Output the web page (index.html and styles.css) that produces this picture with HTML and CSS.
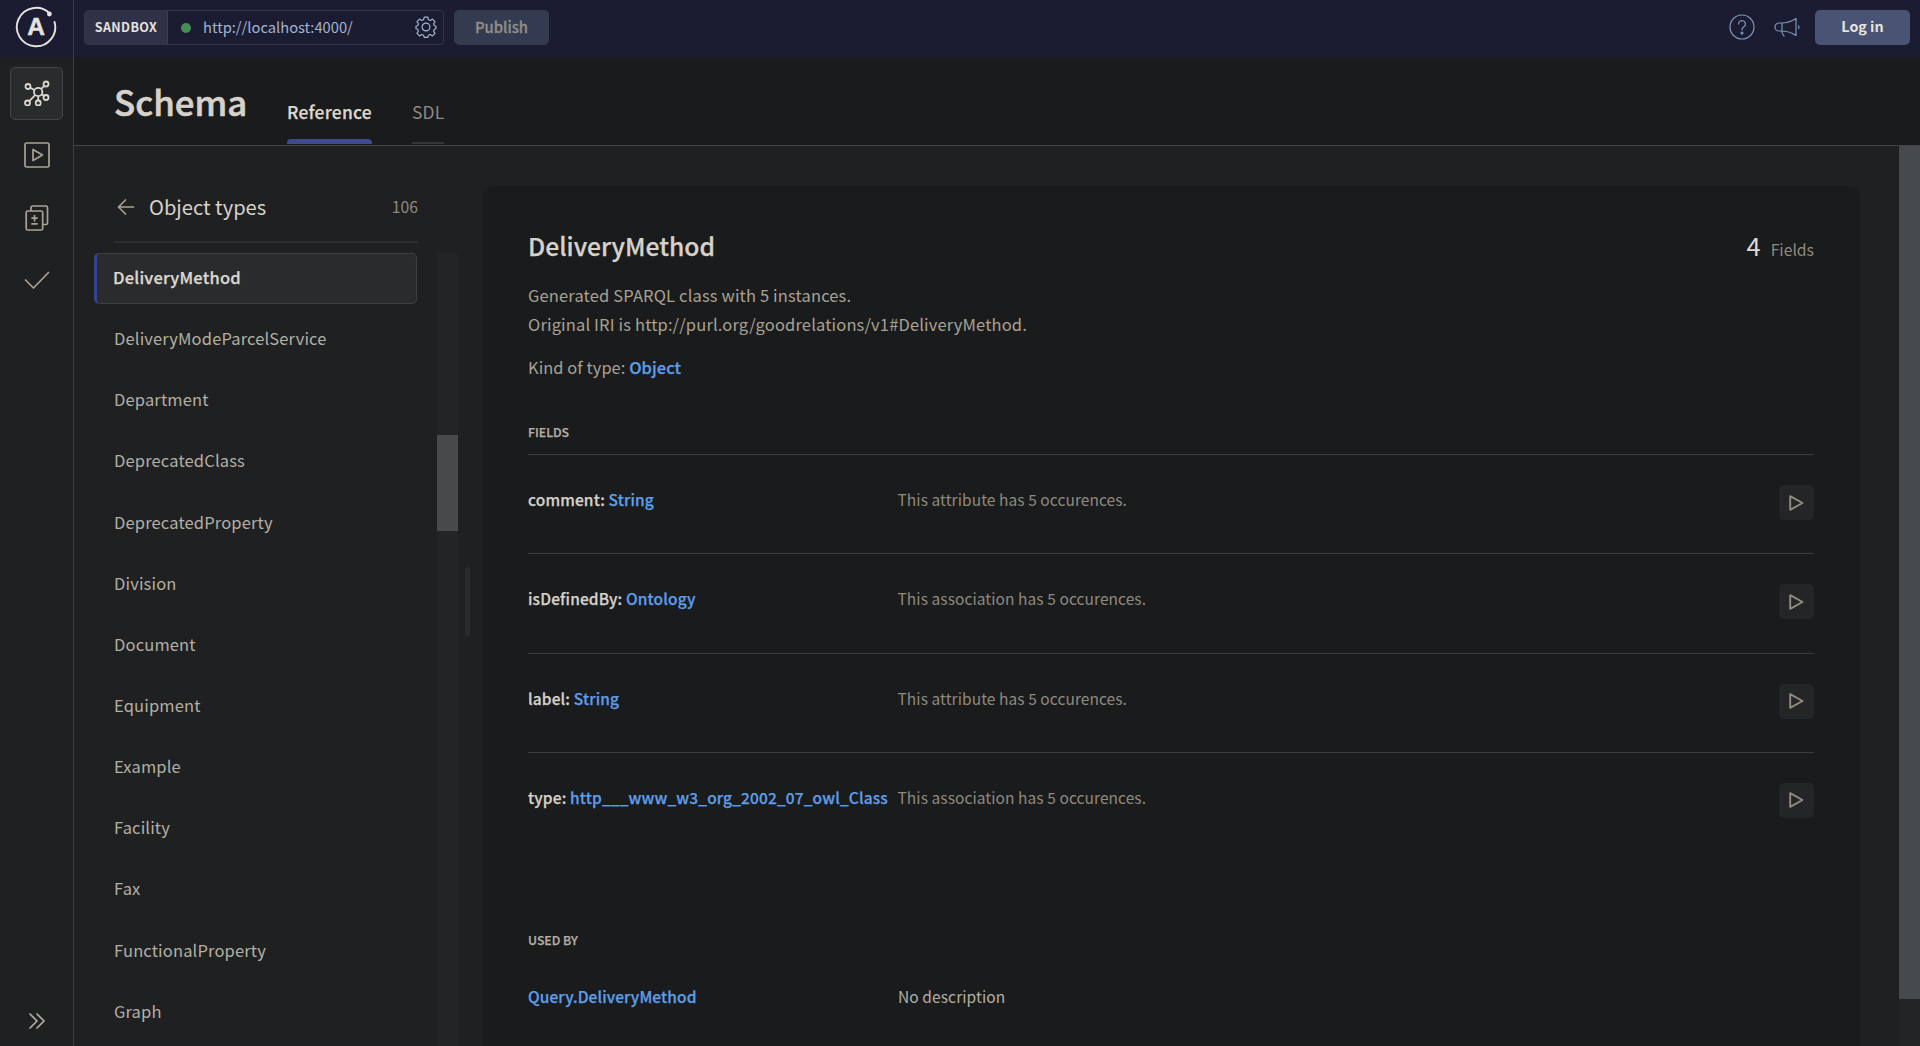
FILE: index.html
```html
<!DOCTYPE html>
<html lang="en">
<head>
<meta charset="utf-8">
<title>Schema</title>
<link rel="stylesheet" href="styles.css">
</head>
<body>
<div class="app">
  <header class="topbar">
    <div class="brand">
      <svg width="42" height="42" viewBox="0 0 42 42" fill="none" stroke="#e6e3de" stroke-width="1.9">
        <path d="M34.6 7.5A19.2 19.2 0 1 0 39.3 15.200"/>
        <circle cx="34.400" cy="8" r="2.400" fill="#e6e3de" stroke="none"/>
        <text class="logo-letter" x="21" y="29" text-anchor="middle">A</text>
      </svg>
    </div>
    <div class="endpoint">
      <span class="mode">SANDBOX</span>
      <span class="dot"></span>
      <span class="url">http://localhost:4000/</span>
      <svg class="gear" width="22" height="22" viewBox="0 0 22 22" fill="none" stroke="#a3b5ce" stroke-width="1.2" stroke-linejoin="round">
        <circle cx="11" cy="11" r="3.9"/>
        <path d="M9.2 1.2h3.6l.6 2.5 1.9.8 2.2-1.4 2.5 2.5-1.4 2.2.8 1.9 1.6.5v2.6l-1.6.5-.8 1.9 1.4 2.2-2.5 2.5-2.2-1.4-1.9.8-.6 2.1H9.2l-.6-2.1-1.9-.8-2.2 1.4L2 17.400l1.400-2.200-.8-1.900L1 12.800v-2.600l1.600-.5.8-1.900L2 5.600l2.500-2.500 2.200 1.400 1.900-.8z"/>
      </svg>
    </div>
    <button class="btn publish">Publish</button>
    <div class="spacer"></div>
    <svg class="help" width="26" height="26" viewBox="0 0 26 26" fill="none" stroke="#7f97b8" stroke-width="1.2" stroke-linecap="round">
      <circle cx="13" cy="13" r="12"/>
      <path d="M9.600 10a3.400 3.400 0 1 1 5.300 2.800c-1.200.8-1.900 1.500-1.900 3"/>
      <circle cx="13" cy="19" r=".9" fill="#7f97b8"/>
    </svg>
    <svg class="horn" width="26" height="26" viewBox="0 0 26 26" fill="none" stroke="#7f97b8" stroke-width="1.200" stroke-linecap="round" stroke-linejoin="round">
      <path d="M8 9H5a4 4 0 0 0 0 8h3zM8 9c5 0 9.500-1.700 14-4.500v17C17.500 18.700 13 17 8 17M8 17c0 2 .7 3.800 2 5M24.800 11.800v2.600"/>
    </svg>
    <button class="btn login">Log in</button>
  </header>
  <div class="body">
    <nav class="rail">
      <div class="rail-item active">
        <svg width="26" height="26" viewBox="0 0 26 26" fill="none" stroke="#dcd8d0" stroke-width="1.800">
          <circle cx="14.200" cy="12" r="4.200"/><circle cx="4" cy="6.500" r="2.500"/><circle cx="22" cy="4" r="2.500"/><circle cx="22" cy="17.500" r="2.500"/><circle cx="14.200" cy="23" r="2.500"/><circle cx="3.500" cy="23" r="2.500"/>
          <path d="M6.200 7.700 10.500 10M20.200 5.800 17.200 9M17.800 14.200 20 16M14.200 16.200V20.500M11.200 15 5.300 21.200"/>
        </svg>
      </div>
      <div class="rail-item">
        <svg width="26" height="26" viewBox="0 0 26 26" fill="none" stroke="#a8a294" stroke-width="1.700" stroke-linejoin="round">
          <rect x="1" y="1" width="24" height="24" rx="1.500"/><path d="M9 7.500v11l9.500-5.500z"/>
        </svg>
      </div>
      <div class="rail-item">
        <svg width="26" height="26" viewBox="0 0 26 26" fill="none" stroke="#a8a294" stroke-width="1.700" stroke-linejoin="round">
          <rect x="2.200" y="6" width="16.500" height="19" rx="1.500"/><path d="M7 6V2.500A1.500 1.500 0 0 1 8.500 1H22a1.500 1.500 0 0 1 1.500 1.500V18a1.500 1.500 0 0 1-1.500 1.500h-3.300M10.500 10v6.400M7.300 13.200h6.400M7.300 18.800h6.400"/>
        </svg>
      </div>
      <div class="rail-item">
        <svg width="26" height="26" viewBox="0 0 26 26" fill="none" stroke="#a8a294" stroke-width="1.700" stroke-linecap="round" stroke-linejoin="round">
          <path d="M1.500 13 9.500 21 24.500 5.500"/>
        </svg>
      </div>
      <div class="rail-item expand">
        <svg width="18" height="18" viewBox="0 0 18 18" fill="none" stroke="#b4afa4" stroke-width="1.700" stroke-linecap="round" stroke-linejoin="round">
          <path d="M2 2l7 7-7 7M9 2l7 7-7 7"/>
        </svg>
      </div>
    </nav>
    <main class="main">
      <div class="page-head">
        <h1>Schema</h1>
        <div class="tab on"><span>Reference</span></div>
        <div class="tab"><span>SDL</span></div>
      </div>
      <div class="content">
        <aside class="side">
          <div class="side-head">
            <svg width="18" height="18" viewBox="0 0 18 18" fill="none" stroke="#a8a294" stroke-width="1.700" stroke-linecap="round" stroke-linejoin="round"><path d="M16.500 9H1.500M8.500 2 1.500 9l7 7"/></svg>
            <h2>Object types</h2>
            <span class="count">106</span>
          </div>
          <div class="list-wrap">
            <ul class="list">
              <li class="sel"><span>DeliveryMethod</span></li>
              <li><span>DeliveryModeParcelService</span></li>
              <li><span>Department</span></li>
              <li><span>DeprecatedClass</span></li>
              <li><span>DeprecatedProperty</span></li>
              <li><span>Division</span></li>
              <li><span>Document</span></li>
              <li><span>Equipment</span></li>
              <li><span>Example</span></li>
              <li><span>Facility</span></li>
              <li><span>Fax</span></li>
              <li><span>FunctionalProperty</span></li>
              <li><span>Graph</span></li>
            </ul>
            <div class="track"><div class="thumb"></div></div>
          </div>
        </aside>
        <div class="resize"></div>
        <section class="card">
          <div class="card-head">
            <h3><span>DeliveryMethod</span></h3>
            <div class="total"><b>4</b><span>Fields</span></div>
          </div>
          <p class="desc"><span>Generated SPARQL class with 5 instances.</span><br><span>Original IRI is http://purl.org/goodrelations/v1#DeliveryMethod.</span></p>
          <p class="kind">Kind of type: <a>Object</a></p>
          <h4 class="fields-title"><span>FIELDS</span></h4>
          <div class="row">
            <div class="name"><span>comment: <a>String</a></span></div><div class="text"><span>This attribute has 5 occurences.</span></div>
            <div class="play"><svg width="18" height="18" viewBox="0 0 18 18"><path d="M3.200 2.200v13.600L15.500 9z"/></svg></div>
          </div>
          <div class="row">
            <div class="name"><span>isDefinedBy: <a>Ontology</a></span></div><div class="text"><span>This association has 5 occurences.</span></div>
            <div class="play"><svg width="18" height="18" viewBox="0 0 18 18"><path d="M3.200 2.200v13.600L15.500 9z"/></svg></div>
          </div>
          <div class="row">
            <div class="name"><span>label: <a>String</a></span></div><div class="text"><span>This attribute has 5 occurences.</span></div>
            <div class="play"><svg width="18" height="18" viewBox="0 0 18 18"><path d="M3.200 2.200v13.600L15.500 9z"/></svg></div>
          </div>
          <div class="row">
            <div class="name"><span>type: <a>http___www_w3_org_2002_07_owl_Class</a></span></div><div class="text"><span>This association has 5 occurences.</span></div>
            <div class="play"><svg width="18" height="18" viewBox="0 0 18 18"><path d="M3.200 2.200v13.600L15.500 9z"/></svg></div>
          </div>
          <h4 class="used-title"><span>USED BY</span></h4>
          <div class="used"><a>Query.DeliveryMethod</a><span>No description</span></div>
        </section>
        <div class="page-track"><div class="page-thumb"></div></div>
      </div>
    </main>
  </div>
</div>
</body>
</html>
```
FILE: styles.css
```css
* { box-sizing: border-box; margin: 0; padding: 0; }
body {
  font-family: "Noto Sans CJK JP", "Noto Sans", sans-serif;
  font-size: 15.76px;
  line-height: 24px;
  color: #d6d2ca;
  background: #1f2021;
  overflow: hidden;
}
svg { display: block; flex: none; }
a { color: #5e9ee8; font-weight: 500; }
a, h3, h4, .name, .tab.on, .sel { -webkit-text-stroke: .25px currentColor; }
.app { width: 1920px; height: 1046px; display: flex; flex-direction: column; overflow: hidden; }

.topbar { height: 57px; flex: none; display: flex; align-items: flex-start; background: #1b1c31; padding-right: 10px; }
.brand { width: 74px; height: 57px; flex: none; padding: 6px 0 0 15px; border-right: 1px solid #323a68; }
.logo-letter { font: 700 24.500px "Liberation Sans", sans-serif; fill: #e6e3de; stroke-width: .5px; }
.endpoint { width: 360px; height: 35px; margin: 10px 0 0 10px; display: flex; align-items: center; border: 1px solid #34354a; border-radius: 4px; overflow: hidden; }
.mode { width: 83px; height: 33px; line-height: 31px; background: #2f3148; border-right: 1px solid #3d3e52; text-align: center; font-size: 12.500px; font-weight: 700; letter-spacing: .4px; color: #e6e3de; }
.dot { width: 10px; height: 10px; border-radius: 50%; background: #458d55; margin-left: 13px; }
.url { margin-left: 12px; color: #a3b5ce; flex: 1; white-space: nowrap; font-size: 14.700px; padding-bottom: 1px; }
.gear { margin: 0 6px 1px 0; }
.btn { height: 35px; width: 95px; margin-top: 10px; border: 0; border-radius: 5px; font: 500 14.800px/31px "Noto Sans CJK JP", sans-serif; padding-bottom: 3px; }
.publish { margin-left: 10px; background: #343b51; color: #918d85; -webkit-text-stroke: .3px currentColor; }
.spacer { flex: 1; }
.help { margin: 14px 19px 0 0; }
.horn { margin: 14px 15px 0 0; }
.login { background: #495373; color: #e6e3de; font-weight: 700; font-size: 14.300px; padding-bottom: 4px; }

.body { flex: 1; display: flex; min-height: 0; }
.rail { width: 74px; flex: none; border-right: 1px solid #3e3f42; padding: 10px 0 4px 10px; display: flex; flex-direction: column; gap: 9.300px; }
.rail-item { width: 53px; height: 53px; flex: none; display: flex; align-items: center; justify-content: center; border: 1px solid transparent; border-radius: 5px; padding: 0 0 1px 0; }
.rail-item.active { background: #2a2b2d; border-color: #434446; }
.expand { margin-top: auto; height: 42px; }

.main { flex: 1; display: flex; flex-direction: column; min-width: 0; }
.page-head { height: 89px; flex: none; background: #1a1b1c; border-bottom: 1px solid #414245; display: flex; padding-left: 40px; }
h1 { font-size: 34.800px; font-weight: 500; line-height: 88px; width: 173px; height: 88px; white-space: nowrap; -webkit-text-stroke: .6px currentColor; }
.tab { margin-right: 40px; height: 87px; line-height: 28px; padding-top: 41px; border-bottom: 2px solid #353638; font-size: 17.400px; letter-spacing: .25px; color: #8f8a7e; white-space: nowrap; }
.tab.on { color: #dcd8d0; font-weight: 500; border: 0; position: relative; }
.tab.on::after { content: ""; position: absolute; left: 0; right: 0; bottom: 0; height: 5px; border-radius: 4px 4px 0 0; background: #3f4a91; }

.content { flex: 1; display: flex; min-height: 0; }
.side { width: 384px; flex: none; padding: 40px 0 0 20px; display: flex; flex-direction: column; }
.side-head { height: 57px; flex: none; margin: 0 40px 0 20px; display: flex; border-bottom: 2px solid #2e2f31; align-items: center; padding: 0 0 13px 3px; }
h2 { font-size: 20.100px; font-weight: 400; margin-left: 14px; flex: 1; white-space: nowrap; }
.count { color: #8f8a7e; }
.list-wrap { flex: 1; display: flex; justify-content: space-between; margin-top: 10px; min-height: 0; }
.list { list-style: none; width: 323px; color: #b4afa4; overflow: hidden; font-size: 16.500px; letter-spacing: .15px; }
.list li { height: 51px; line-height: 46px; margin-bottom: 10.150px; padding-left: 19px; border: 1px solid transparent; white-space: nowrap; }
.list li.sel { background: #2a2b2d; border: 1px solid #3e3f42; border-left: 3px solid #35428c; border-radius: 5px; padding-left: 16px; color: #dcd8d0; font-weight: 500; letter-spacing: .2px; }
.track { width: 21px; background: #232426; padding-top: 182px; }
.thumb { height: 96px; background: #47494c; }
.resize { width: 5px; height: 70px; margin: 421px 13px 0 7px; border-radius: 3px; background: #2a2b2d; flex: none; }
.card { width: 1377px; flex: none; margin-top: 40px; padding: 39px 46px 0 45px; background: #1a1b1c; border-radius: 10px 10px 0 0; overflow: hidden; }
.card-head { display: flex; justify-content: space-between; align-items: baseline; height: 56px; line-height: 40px; }
h3 { font-size: 24.700px; font-weight: 500; }
.total { color: #8f8a7e; }
.total b { font-weight: 400; font-size: 25.500px; color: #dcd8d0; margin-right: 10px; }
.desc { color: #a8a294; line-height: 29px; font-size: 16.500px; letter-spacing: .15px; }
.kind { color: #a8a294; margin-top: 14px; line-height: 29px; font-size: 16.400px; letter-spacing: .08px; }
h4 { font-size: 12.300px; font-weight: 500; color: #b4afa4; line-height: 19px; }
.fields-title { margin-top: 41px; border-bottom: 1px solid #3b3c3f; height: 32px; }
.row { height: 99.330px; display: flex; padding-top: 30px; border-bottom: 1px solid #3b3c3f; white-space: nowrap; }
.row:nth-of-type(5) { border: 0; }
.name, .text { padding-top: 2px; font-size: 15.500px; letter-spacing: .14px; }
.name { width: 369.500px; font-weight: 500; }
.text { flex: 1; color: #8f8a7e; letter-spacing: .07px; }
.play { width: 35px; height: 35px; border-radius: 5px; background: #242526; display: flex; align-items: center; justify-content: center; padding-right: 1px; }
.play path { fill: none; stroke: #928c80; stroke-width: 1.900; stroke-linejoin: round; }
.used-title { margin-top: 78.600px; }
.used { margin-top: 34px; display: flex; font-size: 15.500px; letter-spacing: .1px; color: #b4afa4; }
.used a { width: 370px; }
.page-track { width: 21px; margin-left: auto; background: #232426; }
.page-thumb { height: 853px; background: #464a4c; }
```
